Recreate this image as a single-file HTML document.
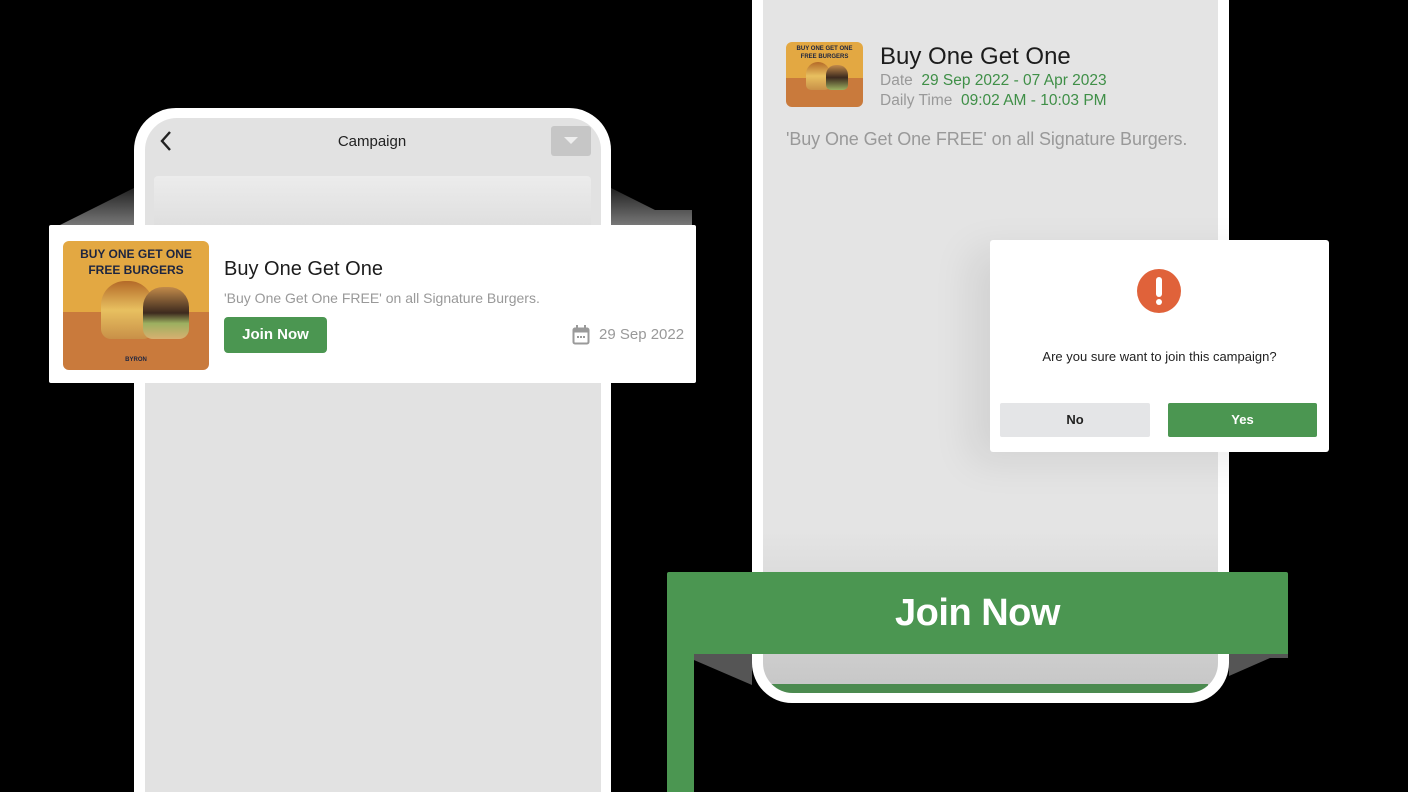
<!DOCTYPE html>
<html><head><style>
*{margin:0;padding:0;box-sizing:border-box}
html,body{width:1408px;height:792px;overflow:hidden}
body{background:#000;position:relative;font-family:"Liberation Sans",sans-serif}
.abs{position:absolute}
.img{background:linear-gradient(#e3a842 0%,#e3a842 55%,#c97a3c 55%,#c97a3c 100%);overflow:hidden}
.img .t{position:absolute;left:0;right:0;text-align:center;font-weight:bold;color:#1d2540;font-family:"Liberation Sans Narrow","Liberation Sans",sans-serif}
</style></head><body>
<svg class="abs" style="left:0;top:0" width="1408" height="792">
<defs>
<linearGradient id="g1" x1="0" y1="0" x2="0" y2="1"><stop offset="0" stop-color="#222"/><stop offset="1" stop-color="#777"/></linearGradient>
</defs>
<polygon points="60,225 134,188 134,225" fill="url(#g1)"/>
<polygon points="611,188 655,210 692,210 692,225 611,225" fill="url(#g1)"/>
<polygon points="680,654 752,654 752,685" fill="#555"/>
<polygon points="1229,654 1288,654 1288,658 1270,658 1229,676" fill="#555"/>
</svg>
<!-- left phone -->
<div class="abs" style="left:134px;top:108px;width:477px;height:684px;background:#fff;border-radius:42px 42px 0 0"></div>
<div class="abs" style="left:145px;top:118px;width:456px;height:674px;background:#e2e2e2;border-radius:32px 32px 0 0"></div>
<svg class="abs" style="left:158px;top:130px" width="16" height="22"><path d="M12 2 L4 11 L12 20" stroke="#222" stroke-width="2.4" fill="none"/></svg>
<div class="abs" style="left:300px;top:133px;width:144px;text-align:center;font-size:15px;color:#222">Campaign</div>
<div class="abs" style="left:551px;top:126px;width:40px;height:30px;background:#c6c6c6;border-radius:3px"></div>
<svg class="abs" style="left:564px;top:137px" width="14" height="8"><path d="M0 0 L14 0 L7 7Z" fill="#eee"/></svg>
<div class="abs" style="left:154px;top:176px;width:437px;height:60px;background:linear-gradient(#ececec,#dcdcdc);border-radius:4px"></div>
<!-- left card -->
<div class="abs" style="left:49px;top:225px;width:647px;height:158px;background:#fff;border-radius:2px"></div>
<div class="abs img" style="left:63px;top:241px;width:146px;height:129px;border-radius:6px">
<div class="t" style="top:5px;font-size:12px;line-height:16px">BUY ONE GET ONE<br>FREE BURGERS</div>
<div class="abs" style="left:38px;top:40px;width:52px;height:58px;border-radius:24px 24px 10px 10px;background:linear-gradient(#b46a28,#e8c060 50%,#c89048)"></div>
<div class="abs" style="left:80px;top:46px;width:46px;height:52px;border-radius:20px 20px 10px 10px;background:linear-gradient(#c28a4a,#3d2a1e 50%,#9cb060 70%,#d8b070)"></div>
<div class="t" style="top:116px;font-size:6px">BYRON</div>
</div>
<div class="abs" style="left:224px;top:258px;font-size:20px;color:#1c1c1c">Buy One Get One</div>
<div class="abs" style="left:224px;top:290px;font-size:14px;color:#999">'Buy One Get One FREE' on all Signature Burgers.</div>
<div class="abs" style="left:224px;top:317px;width:103px;height:36px;background:#4b9651;border-radius:4px;color:#fff;font-size:15px;font-weight:bold;text-align:center;line-height:36px">Join Now</div>
<svg class="abs" style="left:572px;top:325px" width="18" height="20"><rect x="1.5" y="3.5" width="15" height="15" rx="1.5" fill="none" stroke="#9a9a9a" stroke-width="2"/><rect x="1.5" y="3.5" width="15" height="4" fill="#9a9a9a"/><rect x="4" y="0" width="2" height="4" fill="#9a9a9a"/><rect x="12" y="0" width="2" height="4" fill="#9a9a9a"/><rect x="5" y="11" width="2" height="2" fill="#9a9a9a"/><rect x="8" y="11" width="2" height="2" fill="#9a9a9a"/><rect x="11" y="11" width="2" height="2" fill="#9a9a9a"/></svg>
<div class="abs" style="left:599px;top:326px;font-size:15px;color:#999">29 Sep 2022</div>
<!-- right phone -->
<div class="abs" style="left:752px;top:-40px;width:477px;height:743px;background:#fff;border-radius:0 0 40px 40px"></div>
<div class="abs" style="left:763px;top:-40px;width:455px;height:733px;background:linear-gradient(#e4e4e4 0%,#e4e4e4 78%,#c6c6c6 100%);border-radius:0 0 30px 30px;overflow:hidden">
<div class="abs" style="left:8px;bottom:0;width:437px;height:9px;background:#4b8a4f"></div>
</div>
<div class="abs img" style="left:786px;top:42px;width:77px;height:65px;border-radius:6px">
<div class="t" style="top:3px;font-size:6px;line-height:8px">BUY ONE GET ONE<br>FREE BURGERS</div>
<div class="abs" style="left:20px;top:20px;width:24px;height:28px;border-radius:12px 12px 5px 5px;background:linear-gradient(#b46a28,#e8c060 50%,#c89048)"></div>
<div class="abs" style="left:40px;top:23px;width:22px;height:25px;border-radius:10px 10px 5px 5px;background:linear-gradient(#c28a4a,#3d2a1e 50%,#9cb060)"></div>
</div>
<div class="abs" style="left:880px;top:43px;font-size:24px;color:#1c1c1c">Buy One Get One</div>
<div class="abs" style="left:880px;top:72px;font-size:15.5px;color:#999">Date&nbsp; <span style="color:#3f8f47">29 Sep 2022 - 07 Apr 2023</span></div>
<div class="abs" style="left:880px;top:92px;font-size:15.5px;color:#999">Daily Time&nbsp; <span style="color:#3f8f47">09:02 AM - 10:03 PM</span></div>
<div class="abs" style="left:786px;top:129px;font-size:18px;color:#999;letter-spacing:-0.1px">'Buy One Get One FREE' on all Signature Burgers.</div>
<!-- dialog -->
<div class="abs" style="left:990px;top:240px;width:339px;height:212px;background:#fff;border-radius:3px;box-shadow:-20px 10px 40px rgba(0,0,0,0.08)"></div>
<div class="abs" style="left:1137px;top:269px;width:44px;height:44px;border-radius:50%;background:#e0623a"></div>
<div class="abs" style="left:1156px;top:277px;width:6px;height:20px;background:#fff;border-radius:3px"></div>
<div class="abs" style="left:1156px;top:299px;width:6px;height:6px;background:#fff;border-radius:50%"></div>
<div class="abs" style="left:990px;top:349px;width:339px;text-align:center;font-size:13px;color:#222">Are you sure want to join this campaign?</div>
<div class="abs" style="left:1000px;top:403px;width:150px;height:34px;background:#e4e5e7;border-radius:2px;text-align:center;line-height:34px;font-size:13px;font-weight:bold;color:#222">No</div>
<div class="abs" style="left:1168px;top:403px;width:149px;height:34px;background:#4b9651;border-radius:2px;text-align:center;line-height:34px;font-size:13px;font-weight:bold;color:#fff">Yes</div>
<!-- banner -->
<div class="abs" style="left:667px;top:572px;width:621px;height:82px;background:#4b9651;border-radius:2px 2px 0 0;color:#fff;font-size:38px;font-weight:bold;text-align:center;line-height:82px;letter-spacing:-0.5px">Join Now</div>
<div class="abs" style="left:667px;top:654px;width:27px;height:138px;background:#4b9651"></div>
</body></html>
